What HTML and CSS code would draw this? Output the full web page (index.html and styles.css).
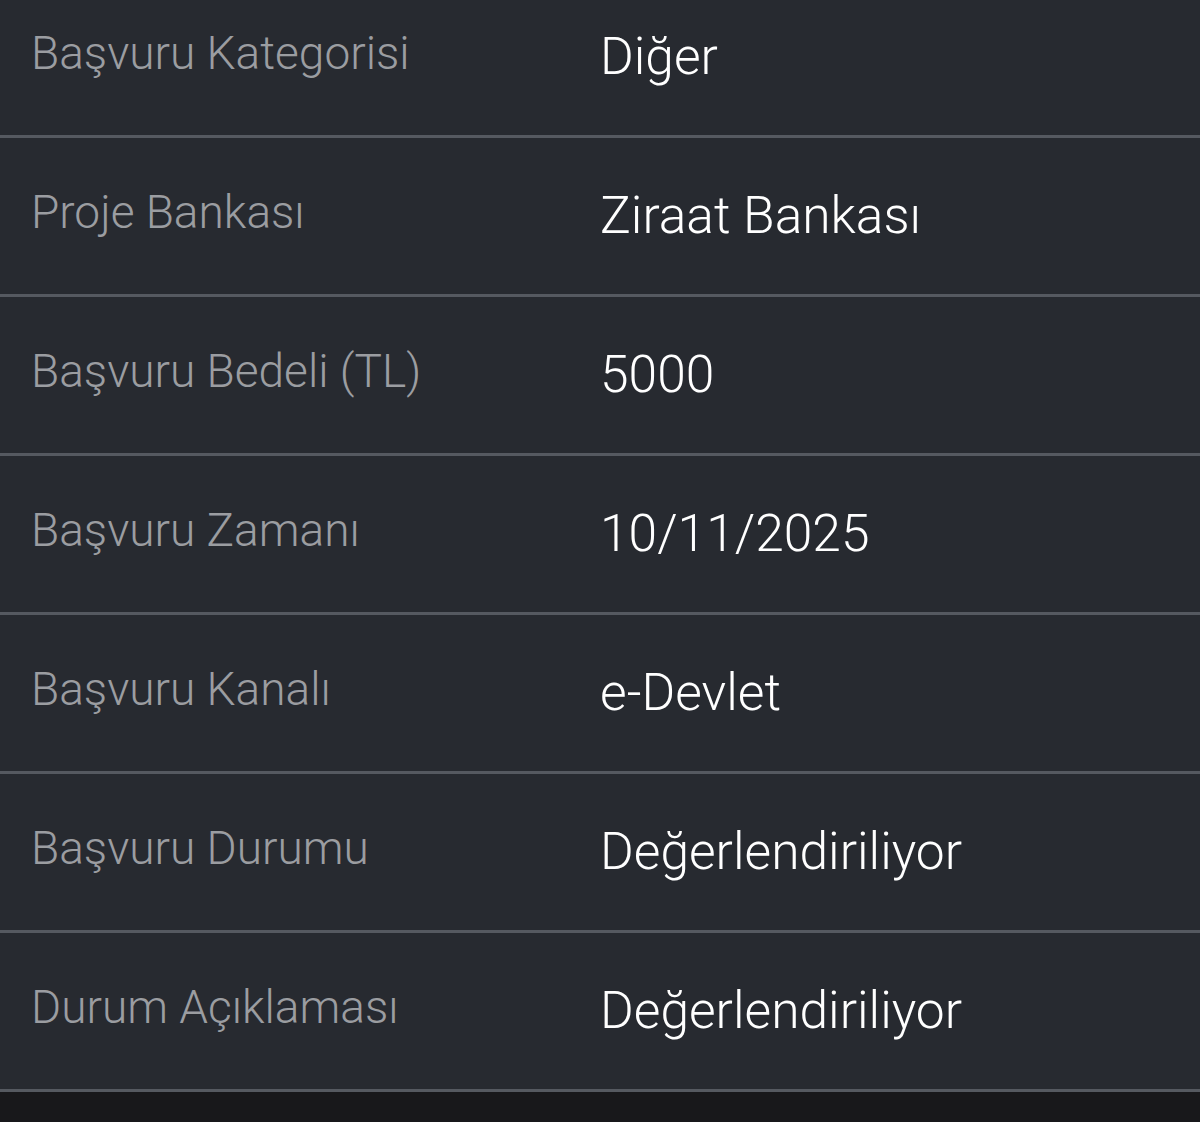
FILE: index.html
```html
<!DOCTYPE html>
<html lang="tr">
<head>
	<meta charset="UTF-8">
	<title>Başvuru Detayı</title>
	<link rel="stylesheet" href="styles.css">
</head>
<body>
	<section class="wrap">
		<ul class="list">
			<li><span class="label">Başvuru Kategorisi</span><span class="value">Diğer</span></li>
			<li><span class="label">Proje Bankası</span><span class="value">Ziraat Bankası</span></li>
			<li><span class="label">Başvuru Bedeli (TL)</span><span class="value">5000</span></li>
			<li><span class="label">Başvuru Zamanı</span><span class="value">10/11/2025</span></li>
			<li><span class="label">Başvuru Kanalı</span><span class="value">e-Devlet</span></li>
			<li><span class="label">Başvuru Durumu</span><span class="value">Değerlendiriliyor</span></li>
			<li><span class="label">Durum Açıklaması</span><span class="value">Değerlendiriliyor</span></li>
		</ul>
	</section>
	<div class="bottom"></div>
</body>
</html>
```

FILE: styles.css
```css
html,body{
	margin: 0;
	overflow: hidden;
}
body{
	background:#18181b;
	font-family: Roboto, "Noto Sans", sans-serif;
	height:1122px;
}
.wrap{
	background:#272a30;
	overflow: hidden;
}
.list{
	margin: -21px 0 0;
	padding: 0;
}
.list li{
	list-style: none;
	height:156px;
	border-bottom:3px solid #555960;
	display: grid;
	grid-template-columns: 569px 1fr;
	align-items: center;
	padding-left:31px;
}
.label{
	color:#9b9da1;
	font-size:46px;
	font-weight:300;
	padding-bottom:8px;
}
.value{
	color:#fff;
	font-size:51.5px;
	font-weight:300;
	padding-bottom:2px;
}
```
